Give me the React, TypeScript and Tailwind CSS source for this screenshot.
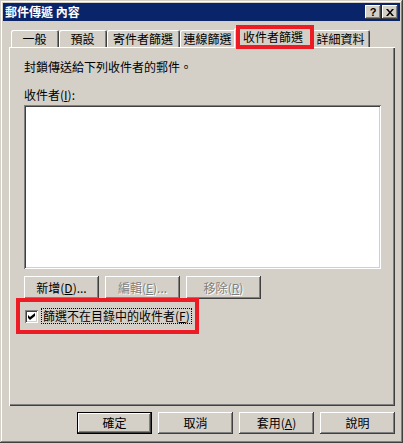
import React from "react";

const raised =
	"shadow-[inset_-1px_-1px_#404040,inset_1px_1px_#ffffff,inset_-2px_-2px_#808080,inset_2px_2px_#d4d0c8]";
const sunken =
	"shadow-[inset_1px_1px_#808080,inset_-1px_-1px_#ffffff,inset_2px_2px_#404040,inset_-2px_-2px_#d4d0c8]";

const tabs = [
	{ label: "一般", w: "w-[48px]" },
	{ label: "預設", w: "w-[48px]" },
	{ label: "寄件者篩選", w: "w-[73px]" },
	{ label: "連線篩選", w: "w-[56px]" },
	{ label: "收件者篩選", w: "w-[78px]", active: true },
	{ label: "詳細資料", w: "w-[58px]" },
];

function Key({ text, k, after = "" }: { text: string; k: string; after?: string }) {
	return (
		<>
			{text}(<span className="underline underline-offset-1">{k}</span>){after}
		</>
	);
}

function Button({
	children,
	disabled,
	isDefault,
	h = "h-[23px]",
}: {
	children: React.ReactNode;
	disabled?: boolean;
	isDefault?: boolean;
	h?: string;
}) {
	if (isDefault) {
		return (
			<div className={`flex ${h} w-[75px] border border-black`}>
				<div className={`flex flex-1 items-center justify-center ${raised}`}>{children}</div>
			</div>
		);
	}
	return (
		<div
			className={`flex ${h} w-[75px] items-center justify-center ${raised} ${
				disabled ? "text-[#808080] [text-shadow:1px_1px_#ffffff]" : ""
			}`}
		>
			{children}
		</div>
	);
}

function TitleBar() {
	return (
		<div className="flex h-[18px] shrink-0 items-center justify-between bg-[#0a246a] pl-[2px] pr-[2px]">
			<span className="text-[12px] font-bold leading-[12px] text-white">郵件傳遞 內容</span>
			<div className="flex gap-[1px]">
				<div
					className={`flex h-[14px] w-[16px] items-center justify-center bg-[#d4d0c8] font-['Liberation_Sans',sans-serif] text-[11px] font-bold leading-[11px] ${raised}`}
				>
					?
				</div>
				<div className={`flex h-[14px] w-[16px] items-center justify-center bg-[#d4d0c8] ${raised}`}>
					<svg width="8" height="7" viewBox="0 0 8 7">
						<path d="M0 0h2l2 2.5L6 0h2L5 3.5 8 7H6L4 4.5 2 7H0l3-3.5z" fill="#000" />
					</svg>
				</div>
			</div>
		</div>
	);
}

export default function App() {
	return (
		<div className="relative flex h-[443px] w-[403px] flex-col bg-[#d4d0c8] p-[3px] font-['Noto_Sans_CJK_TC',sans-serif] text-[12px] leading-[12px] text-black shadow-[inset_-1px_-1px_#404040,inset_1px_1px_#d4d0c8,inset_-2px_-2px_#808080,inset_2px_2px_#ffffff]">
			<TitleBar />

			{/* tabs */}
			<div className="ml-[8px] mt-[7px] flex h-[19px] shrink-0 items-end">
				{tabs.map((t) =>
					t.active ? (
						<div
							key={t.label}
							className={`relative z-10 -mb-px -ml-[2px] flex h-[20px] ${t.w} items-center justify-center rounded-t-[2px] bg-[#d4d0c8] pb-[3px] shadow-[inset_1px_1px_#ffffff,inset_-1px_0_#404040,inset_-2px_0_#808080]`}
						>
							{t.label}
						</div>
					) : (
						<div
							key={t.label}
							className={`flex h-[17px] ${t.w} items-center justify-center rounded-t-[2px] pr-[1px] shadow-[inset_1px_1px_#ffffff,inset_-1px_0_#404040,inset_-2px_0_#808080]`}
						>
							{t.label}
						</div>
					)
				)}
			</div>

			{/* tab panel */}
			<div className="ml-[6px] flex h-[359px] w-[386px] shrink-0 flex-col pl-[15px] pt-[14px] shadow-[inset_1px_1px_#ffffff,inset_-1px_-1px_#404040,inset_-2px_-2px_#808080]">
				<p className="h-[12px]">封鎖傳送給下列收件者的郵件。</p>
				<p className="mt-[16px] h-[12px]">
					<Key text="收件者" k="I" after=":" />
				</p>
				<div className={`mt-[4px] h-[164px] w-[357px] bg-white ${sunken}`} />

				<div className="mt-[7px] flex gap-[6px]">
					<Button>
						<Key text="新增" k="D" after="..." />
					</Button>
					<Button disabled>
						<Key text="編輯" k="E" after="..." />
					</Button>
					<Button disabled>
						<Key text="移除" k="R" />
					</Button>
				</div>

				<div className="ml-[1px] mt-[9px] flex items-center">
					<div className={`flex h-[13px] w-[13px] items-center justify-center bg-white ${sunken}`}>
						<svg width="7" height="7" viewBox="0 0 7 7">
							<path d="M0 2l2 2 5-4v3L2 7 0 5z" fill="#000" />
						</svg>
					</div>
					<div className="ml-[3px] flex h-[16px] items-center border border-dotted border-black px-[1px]">
						<Key text="篩選不在目錄中的收件者" k="F" />
					</div>
				</div>
			</div>

			{/* dialog buttons */}
			<div className="mt-[6px] flex justify-end gap-[6px] pr-[5px]">
				<Button isDefault h="h-[22px]">
					確定
				</Button>
				<Button h="h-[22px]">取消</Button>
				<Button h="h-[22px]">
					<Key text="套用" k="A" />
				</Button>
				<Button h="h-[22px]">說明</Button>
			</div>

			{/* red annotation boxes */}
			<div className="pointer-events-none absolute left-[236px] top-[25px] z-20 h-[24px] w-[78px] border-4 border-[#ed1c24]" />
			<div className="pointer-events-none absolute left-[16px] top-[298px] z-20 h-[36px] w-[183px] border-4 border-[#ed1c24]" />
		</div>
	);
}
